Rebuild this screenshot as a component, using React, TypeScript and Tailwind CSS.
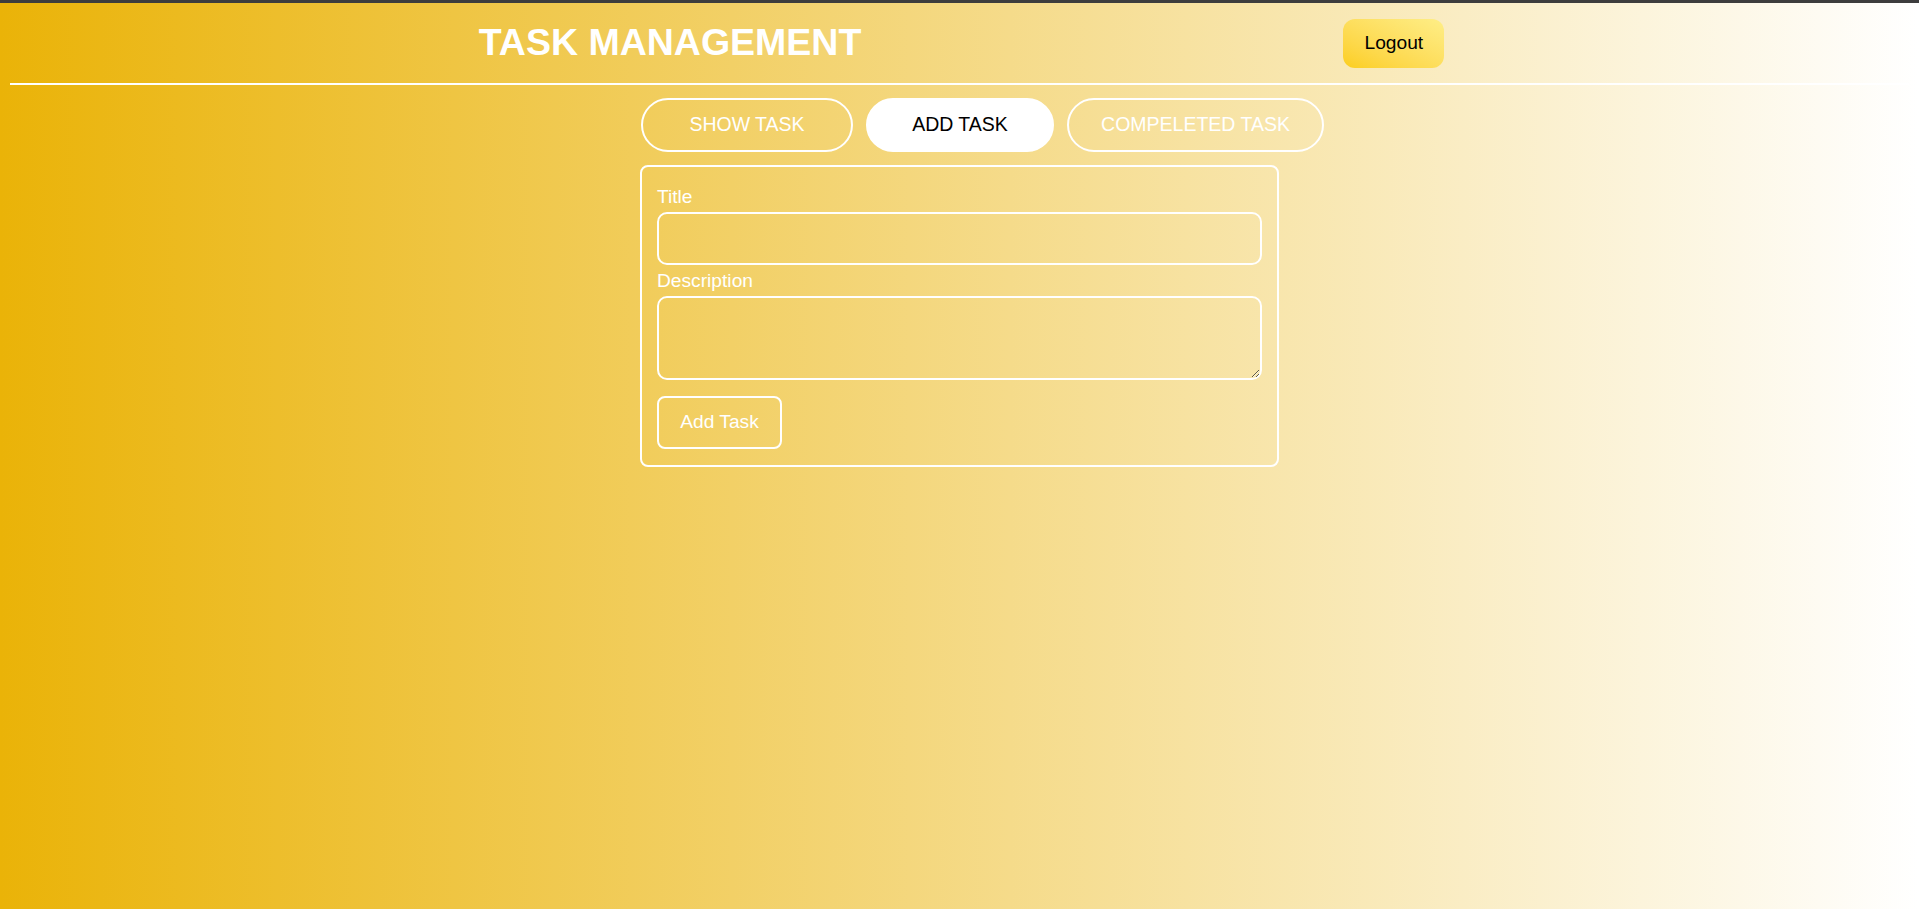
import { useState } from 'react';

const tabs = [
  { key: 'show', label: 'SHOW TASK', width: 'w-[212px]' },
  { key: 'add', label: 'ADD TASK', width: 'w-[188px]' },
  { key: 'completed', label: 'COMPELETED TASK', width: 'w-[257px]' },
];

export default function App() {
  const [active, setActive] = useState('add');
  const [title, setTitle] = useState('');
  const [description, setDescription] = useState('');

  return (
    <div
      className="min-h-screen bg-[linear-gradient(to_right,#eab308,#ffffff)] text-white"
      style={{ fontFamily: '"Liberation Sans", Arial, sans-serif' }}
    >
      <div className="h-[3px] bg-[#3d3d3d]" />

      <header className="flex h-[80px] items-center justify-center gap-[482px] pl-[4px]">
        <h1 className="text-[37.5px] font-bold leading-none text-white">TASK MANAGEMENT</h1>
        <button className="h-[49px] w-[101px] rounded-[12px] bg-linear-to-tr from-[#fcce18] to-[#feee86] text-[19.2px] text-black">
          Logout
        </button>
      </header>
      <div className="mx-[10px] h-[2px] bg-white" />

      <main className="mx-auto w-[639px] pt-[13px]">
        <nav className="flex gap-[13px] pl-[1px]">
          {tabs.map((t) => (
            <button
              key={t.key}
              onClick={() => setActive(t.key)}
              className={`h-[54px] shrink-0 rounded-full border-2 border-white text-[19.5px] ${t.width} ${
                active === t.key ? 'bg-white text-black' : 'bg-transparent text-white'
              }`}
            >
              {t.label}
            </button>
          ))}
        </nav>

        <form
          className="mt-[13px] flex flex-col items-start rounded-[8px] border-2 border-white px-[15px] pb-[16px] pt-[19px]"
          onSubmit={(e) => e.preventDefault()}
        >
          <label className="text-[19.2px] leading-[22px]">Title</label>
          <input
            value={title}
            onChange={(e) => setTitle(e.target.value)}
            className="mt-[4px] h-[53px] w-full rounded-[10px] border-2 border-white bg-transparent px-3 text-[19.2px] outline-none"
          />
          <label className="mt-[5px] text-[19.2px] leading-[22px]">Description</label>
          <textarea
            value={description}
            onChange={(e) => setDescription(e.target.value)}
            className="mt-[4px] h-[84px] w-full rounded-[10px] border-2 border-white bg-transparent px-3 py-2 text-[19.2px] outline-none"
          />
          <button
            type="submit"
            className="mt-[16px] h-[53px] w-[125px] rounded-[8px] border-2 border-white bg-transparent text-[19.2px] text-white"
          >
            Add Task
          </button>
        </form>
      </main>
    </div>
  );
}
